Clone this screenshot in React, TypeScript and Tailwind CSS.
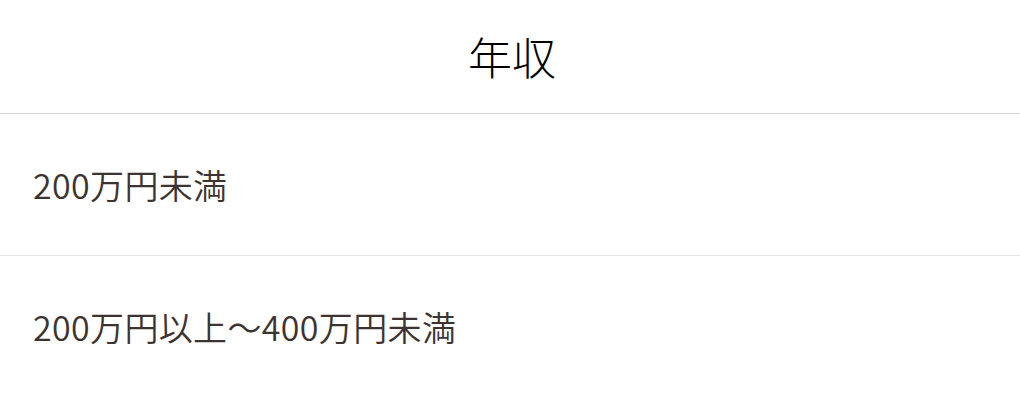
export default function App() {
  const font = { fontFamily: '"Noto Sans CJK JP", "Noto Sans", sans-serif' };
  return (
    <div className="w-[1020px] h-[420px] bg-white overflow-hidden" style={font}>
      <div className="h-[114px] flex items-center justify-center border-b border-[#d4d4d4]">
        <span className="text-[44px] text-black leading-none font-light -mt-[2px] pl-[4px]">年収</span>
      </div>
      <div className="h-[142px] flex items-center pl-[33px] border-b border-[#e4e4e4]">
        <span className="text-[34px] text-[#3d3431] leading-none tracking-[0.35px] font-[350]">200万円未満</span>
      </div>
      <div className="h-[142px] flex items-center pl-[33px]">
        <span className="text-[34px] text-[#3d3431] leading-none tracking-[0.35px] font-[350]">200万円以上～400万円未満</span>
      </div>
    </div>
  );
}
